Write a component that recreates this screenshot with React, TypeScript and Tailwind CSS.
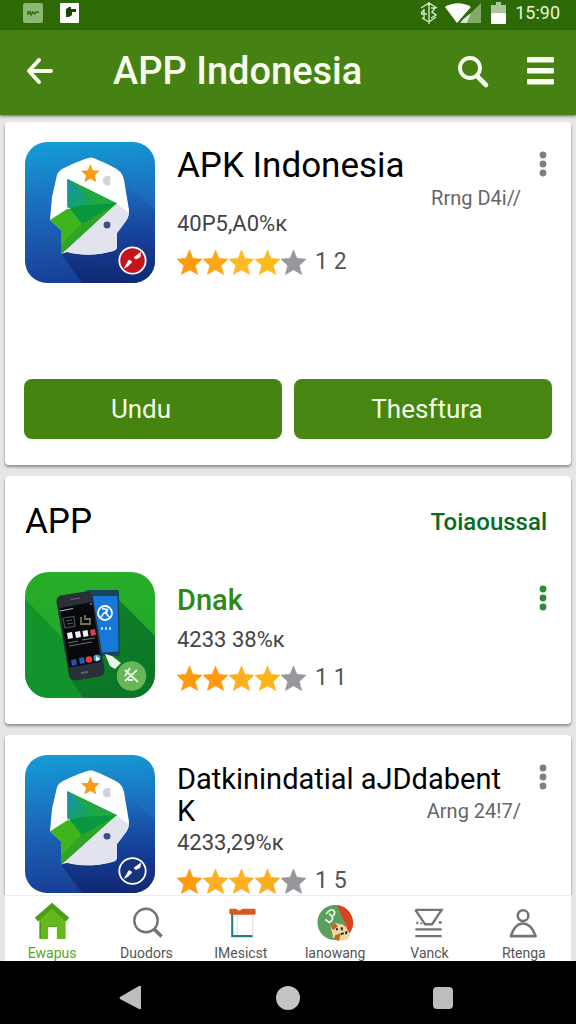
import React, { useState } from 'react';
import clsx from 'clsx';

type AppInfo = {
  title: string;
  titleRest?: string;
  tag?: string;
  size: string;
  stars: string[];
  reviews: string;
};

const GREY = '#97979b';

const featured: AppInfo = {
  title: 'APK Indonesia',
  tag: 'Rrng D4i//',
  size: '40P5,A0%к',
  stars: ['#ff9a0d', '#fba81c', '#fdb92a', '#fdba1c', GREY],
  reviews: '1 2',
};

const dnak: AppInfo = {
  title: 'Dnak',
  size: '4233 38%к',
  stars: ['#ff9a0d', '#ff9a12', '#fdae22', '#fdb41c', GREY],
  reviews: '1 1',
};

const datkin: AppInfo = {
  title: 'Datkinindatial aJDdabent',
  titleRest: 'K',
  tag: 'Arng 24!7/',
  size: '4233,29%к',
  stars: ['#ff9a0d', '#fdb022', '#fdb022', '#fbae1c', GREY],
  reviews: '1 5',
};

const STAR = 'M12 0l3.2 8 8.800.8-6.500 6 2.300 8.700-7.800-4.500-7.800 4.500 2.300-8.700L0 8.800l8.800-.8z';

function Stars({ colors, reviews }: { colors: string[]; reviews: string }) {
  return (
    <div className="flex h-7 items-center gap-px">
      {colors.map((color, i) => (
        <svg key={i} viewBox="0 0 24 24" className="h-[25px] w-[25px] shrink-0" fill={color} stroke={color} strokeWidth="0.6">
          <path d={STAR} />
        </svg>
      ))}
      <span className="ml-2 text-[23px] leading-7 text-[#555]">{reviews}</span>
    </div>
  );
}

function Kebab({ className }: { className: string }) {
  return (
    <button aria-label="More options" className={clsx('h-7 w-4 shrink-0', className)}>
      <svg viewBox="0 0 16 28" className="h-7 w-4" fill="currentColor">
        <circle cx="8" cy="5" r="3.4" />
        <circle cx="8" cy="14" r="3.4" />
        <circle cx="8" cy="23" r="3.4" />
      </svg>
    </button>
  );
}

function HelmetIcon({ id, badge, className }: { id: string; badge: string; className: string }) {
  return (
    <svg viewBox="0 0 130 141" preserveAspectRatio="none" className={className}>
      <defs>
        <linearGradient id={`${id}-bg`} x1="0.2" y1="0" x2="0.3" y2="1">
          <stop offset="0" stopColor="#149dd6" />
          <stop offset="0.45" stopColor="#1c6cbd" />
          <stop offset="1" stopColor="#173e96" />
        </linearGradient>
        <linearGradient id={`${id}-tip`} x1="0" y1="0" x2="0.8" y2="1">
          <stop offset="0" stopColor="#1d8bb8" />
          <stop offset="0.5" stopColor="#169d84" />
          <stop offset="1" stopColor="#17a843" />
        </linearGradient>
        <linearGradient id={`${id}-shade`} x1="0.5" y1="0" x2="0.5" y2="1">
          <stop offset="0" stopColor="#12479e" stopOpacity="0" />
          <stop offset="0.6" stopColor="#12318a" stopOpacity="0.6" />
          <stop offset="1" stopColor="#102a72" />
        </linearGradient>
        <clipPath id={`${id}-clip`}>
          <rect width="130" height="141" rx="22" />
        </clipPath>
      </defs>
      <g clipPath={`url(#${id}-clip)`}>
        <rect width="130" height="141" fill={`url(#${id}-bg)`} />
        <path d="M98 36L130 68V141H57L36 112Z" fill={`url(#${id}-shade)`} />
        <path
          d="M66 15.500C70 16 89 25 93 28C97 31 98 34 99 38L104 68C104 73 103 76 101.500 78L92 91V104C92 107 91 108 88 109C73 113.500 56 114 42 110L36 112V88L25 78L27 55L32 33C33 30 35 28 39 26C47 22 61 16 66 15.500Z"
          fill="#fff"
        />
        <path d="M92 62L104 71C103 76 102 77 101 79L92 91V104C92 107 91 108 88 109C73 113.500 56 114 40 109Z" fill="#e3e3ef" />
        <path d="M25 78L42 67L92 61L36 112.500V88Z" fill="#3fb41c" />
        <path d="M36 112.500L92 61L56 82L36 103Z" fill="#2fa426" />
        <path d="M42.500 37L92 61.500L57 82L42.500 63Z" fill="#08983f" />
        <path d="M42.500 37L92 61.500L45 63.500L42.500 65Z" fill="#22a843" />
        <path d="M42.500 37L70 61L42.500 66Z" fill={`url(#${id}-tip)`} />
        <path d={STAR} transform="translate(56 22) scale(.78)" fill="#f99a18" />
        <path d="M78 37C79 34 83 33 85.500 34.500V42C83 45 79 43 78 40Z" fill="#d3d3de" />
        <circle cx="82" cy="83" r="3.400" fill="#3b4f83" />
        <circle cx="107.500" cy="118.500" r="13.200" fill={badge} stroke="#fff" strokeWidth="1.800" />
        <path d="M99.500 126L104 118L107 120L103 124Z M109 115.500L115.500 110.500L115 115L111 117Z" fill="#fff" stroke="#fff" strokeWidth=".8" />
      </g>
    </svg>
  );
}

function PhonesIcon({ className }: { className: string }) {
  return (
    <svg viewBox="0 0 130 126" className={className}>
      <defs>
        <linearGradient id="phones-bg" x1="0" y1="0" x2="0" y2="1">
          <stop offset="0" stopColor="#27ad27" />
          <stop offset="1" stopColor="#21a532" />
        </linearGradient>
        <linearGradient id="phones-shade" x1="0" y1="0" x2="0.4" y2="1">
          <stop offset="0" stopColor="#118126" />
          <stop offset="1" stopColor="#0b7726" />
        </linearGradient>
        <clipPath id="phones-clip">
          <rect width="130" height="126" rx="24" />
        </clipPath>
      </defs>
      <g clipPath="url(#phones-clip)">
        <rect width="130" height="126" fill="url(#phones-bg)" />
        <path d="M0 27L58 87V126H0Z" fill="#12932c" />
        <path d="M94 28L130 64V126H58L46 108Z" fill="url(#phones-shade)" />
        <path d="M63 20L92 20L93 82L70 82Z" fill="#19445c" stroke="#19445c" strokeWidth="4" strokeLinejoin="round" />
        <path d="M66 24H92.500L93.500 79.500L70 81Z" fill="#1678d8" />
        <circle cx="80" cy="41" r="7" fill="none" stroke="#fff" strokeWidth="1.800" />
        <path d="M77 37H80C83 37 83 41 79 41L76 45M81 41L84 45M83 37L80 41" fill="none" stroke="#fff" strokeWidth="1.600" />
        <path d="M76 56.500H78M80 56.500H82M84 56.500H86" stroke="#cfe6ff" strokeWidth="2.500" />
        <path d="M36 26L61 22C63 22 65 23 65.500 25L77 98C77 100 76 102 74 102L50 106C48 106 47 105 46.500 103L34 30C34 28 34 27 36 26Z" fill="#293039" stroke="#293039" strokeWidth="5" strokeLinejoin="round" />
        <path d="M35 36L67.500 30L76 90L44 95.500Z" fill="#08090d" />
        <path d="M46 27.500L55 26" stroke="#626a70" strokeWidth="1.200" />
        <path d="M35 39L48 36.500M66 31V33" stroke="#bbb" strokeWidth="1" />
        <path d="M38 46L49 44.500L50 54L40 56Z" fill="none" stroke="#4b5050" strokeWidth="1.200" />
        <path d="M41 49L47 48M42 52L48 51" stroke="#53605a" strokeWidth="1" />
        <path d="M56 45V52H65V47H60V43" fill="none" stroke="#777457" strokeWidth="1.800" />
        <path d="M42 61L47 60L48 66L43 67Z M50 60L55 59L56 65L51 66Z M57.500 59L62.500 58L63.500 64L58.500 65Z" fill="#f3f3f3" />
        <path d="M65 58L70 57L71 63L66 64Z" fill="#d83d51" />
        <path d="M43 71L53 69M44 74L67 70M57 68L70 66" stroke="#8a8a8a" strokeWidth=".8" />
        <path d="M46 88L51 87L52 93L47 94Z" fill="#2451b3" />
        <path d="M54 86L59 85L60 91L55 92Z" fill="#3158b5" />
        <circle cx="64" cy="87.500" r="3.300" fill="#ed3b3c" />
        <circle cx="72" cy="86" r="3.500" fill="#30a7d3" />
        <path d="M71 84L75 87L71 89Z" fill="#fff" />
        <path d="M56 101L63 100" stroke="#5d656c" strokeWidth="2" />
        <path d="M80 82L87 84L96 91L93 94L90 97L85 94L82 87Z" fill="#edf1e7" />
        <circle cx="106.500" cy="104" r="14.700" fill="#67b657" />
        <path d="M100 98L113 110M112 98L100 109M100 104L105 96M103 108H108" fill="none" stroke="#e6f5dc" strokeWidth="1.800" />
      </g>
    </svg>
  );
}

type AppRowProps = {
  app: AppInfo;
  icon: React.ReactNode;
  titleClass: string;
  infoClass: string;
  kebabClass: string;
};

function AppRow({ app, icon, titleClass, infoClass, kebabClass }: AppRowProps) {
  return (
    <div className="flex items-start">
      {icon}
      <div className={clsx('ml-[22px] flex min-w-0 flex-1 flex-col', infoClass)}>
        <h2 className={clsx('whitespace-nowrap', titleClass)}>{app.title}</h2>
        {app.tag && (
          <div className="flex items-center justify-between">
            <span className={titleClass}>{app.titleRest}</span>
            <span className="text-[20px] leading-5 text-[#666]">{app.tag}</span>
          </div>
        )}
        <p className="text-[22px] leading-8 text-[#444]">{app.size}</p>
        <div className="mt-2">
          <Stars colors={app.stars} reviews={app.reviews} />
        </div>
      </div>
      <Kebab className={clsx('ml-[14px]', kebabClass)} />
    </div>
  );
}

function StatusBar() {
  return (
    <div className="flex h-[30px] shrink-0 items-center bg-[#2d6a05] pr-4 pl-[23px] pb-1">
      <svg viewBox="0 0 20 20" className="h-5 w-5">
        <rect width="20" height="20" rx="2" fill="#8db873" />
        <path d="M5 8V12M7 8L8 12L10 9L12 11L13 9H16M5 10H8" fill="none" stroke="#356d16" strokeWidth="1.500" />
      </svg>
      <svg viewBox="0 0 20 20" className="ml-[17px] h-5 w-5">
        <rect width="19" height="20" rx="1" fill="#fff" />
        <path d="M6 6L9 4H11V6H16V9H12V12L9 14H6Z" fill="#1e4607" />
      </svg>
      <div className="ml-auto flex items-center">
        <svg viewBox="0 0 18 22" className="h-[22px] w-[18px]" fill="none" stroke="#d5e9c5" strokeWidth="1.400">
          <path d="M9 0V22M1 6L9 1L17 6M4 7V17M1 12H7M2 16L9 20L16 15M11 6H15L12 10L16 13L11 16M4 8L1 11" />
        </svg>
        <svg viewBox="0 0 36 20" className="ml-[7px] h-5 w-9">
          <path d="M36 0V20H16Z" fill="#80aa65" />
          <path d="M18 16L26 10L22 20H14Z" fill="#d7e7cb" />
          <path d="M0 4C8-1 18-1 26 4L12 20Z" fill="#fff" />
          <path d="M28 3L14 20" stroke="#2d6a05" strokeWidth="1.500" />
        </svg>
        <svg viewBox="0 0 15 22" className="ml-[10px] h-[22px] w-[15px]">
          <path d="M5 0H10V3H15V11H0V3H5Z" fill="#abc69a" />
          <rect y="11" width="15" height="11" rx="1" fill="#fff" />
        </svg>
        <span className="ml-[9px] text-[18px] leading-6 text-[#e6f5dc]">15:90</span>
      </div>
    </div>
  );
}

const tabs = [
  {
    label: 'Ewapus',
    icon: (
      <svg viewBox="0 0 38 40" className="h-10 w-[38px]">
        <path d="M6 18L19 7L33 18V38H24V25H15V38H6Z" fill="#66b91d" />
        <path d="M3 18L19 4L35 18" fill="none" stroke="#4c9e17" strokeWidth="5" />
        <path d="M7 20V37M15 25H24" stroke="#438f14" strokeWidth="1" />
      </svg>
    ),
  },
  {
    label: 'Duodors',
    icon: (
      <svg viewBox="0 0 38 40" className="h-10 w-[38px]" fill="none" stroke="#737373">
        <circle cx="19" cy="19" r="12" strokeWidth="2.500" />
        <path d="M27.500 28L35 35.500" strokeWidth="3.600" />
      </svg>
    ),
  },
  {
    label: 'IMesicst',
    icon: (
      <svg viewBox="0 0 38 40" className="h-10 w-[38px]">
        <path d="M10 12V35H31" fill="none" stroke="#247f8d" strokeWidth="2.200" />
        <path d="M15 13V33M31 13V34" stroke="#e3dedc" strokeWidth="1.200" />
        <path d="M8 7H14L17 9L21 7H33Q34 7 34 9V12Q34 13 32 13H10Q7 13 7 11V8Z" fill="#d75a1d" />
      </svg>
    ),
  },
  {
    label: 'lanowang',
    icon: (
      <svg viewBox="0 0 38 40" className="h-10 w-[38px]">
        <circle cx="19" cy="21" r="18" fill="#5b9f5f" />
        <path d="M21 3C41 6 43 31 27 37L30 23Z" fill="#d9421d" />
        <path d="M10 12Q15 6 18 9Q20 12 16 15L13 12M16 15Q18 18 13 21L9 18" fill="none" stroke="#e8f6de" strokeWidth="1.800" />
        <path d="M14 24L19 21L25 23L30 21L31 27L35 34L31 39L23 40L17 37L16 31Z" fill="#eed9a1" />
        <path d="M14 24L19 21L22 25L17 29Z M26 22L31 21L30 26Z M19 34L25 32L23 40L18 38Z" fill="#b96b2b" />
        <path d="M20 28H22M26 26V29M25 33L28 32M31 30L30 33" stroke="#2a2215" strokeWidth="2" />
      </svg>
    ),
  },
  {
    label: 'Vanck',
    icon: (
      <svg viewBox="0 0 38 40" className="h-10 w-[38px]" fill="none" stroke="#747474" strokeWidth="2.400">
        <path d="M5 8H32L22 23H15L5 8" />
        <path d="M10 22H12M14 22L22 23L26 18" strokeWidth="1.600" />
        <path d="M5 28H32M5 35H32" />
        <path d="M6 21.500H8M29 21H32" />
      </svg>
    ),
  },
  {
    label: 'Rtenga',
    icon: (
      <svg viewBox="0 0 38 40" className="h-10 w-[38px]" fill="none" stroke="#747474" strokeWidth="2.600">
        <circle cx="18" cy="14" r="5.500" />
        <path d="M5.500 35C8 27 12 22 18 22C24 22 28 27 31 35Z" strokeLinejoin="round" />
      </svg>
    ),
  },
];

export default function App() {
  const [activeTab, setActiveTab] = useState('Ewapus');

  return (
    <div className="flex h-screen w-full flex-col overflow-hidden bg-[#e6e6e6] font-[Roboto,sans-serif]">
      <StatusBar />

      {/* app bar */}
      <header className="z-10 flex h-[85px] shrink-0 items-center bg-[#468213] pr-4 pb-1 pl-6 text-[#f8ffed] shadow-[0_1px_3px_rgba(0,0,0,0.6)]">
        <button aria-label="Back" className="h-8 w-8">
          <svg viewBox="0 0 32 32" className="h-8 w-8" fill="none" stroke="currentColor" strokeWidth="4" strokeLinecap="round" strokeLinejoin="round">
            <path d="M15 5L5 16L15 27M6 16H27" />
          </svg>
        </button>
        <h1 className="ml-[57px] flex-1 text-[38px] leading-[48px] font-medium whitespace-nowrap">APP Indonesia</h1>
        <button aria-label="Search" className="h-9 w-9">
          <svg viewBox="0 0 36 36" className="h-9 w-9" fill="none" stroke="currentColor" strokeLinecap="round">
            <circle cx="14" cy="15" r="10" strokeWidth="3.800" />
            <path d="M22 24L30 32" strokeWidth="4.600" />
          </svg>
        </button>
        <button aria-label="Menu" className="ml-8 h-9 w-9">
          <svg viewBox="0 0 36 36" className="h-9 w-9" fill="currentColor">
            <rect x="3" y="4" width="27" height="5.500" rx="1" />
            <rect x="3" y="15" width="27" height="5.500" rx="1" />
            <rect x="3" y="26" width="27" height="5.500" rx="1" />
          </svg>
        </button>
      </header>

      {/* cards */}
      <main className="flex min-h-0 flex-1 flex-col gap-[11px] overflow-hidden px-[5px] pt-[7px]">
        <section className="shrink-0 rounded bg-white px-5 pt-5 pb-[26px] shadow-[0_2px_3px_rgba(0,0,0,0.4)]">
          <AppRow
            app={featured}
            icon={<HelmetIcon id="featured" badge="#c4141c" className="h-[141px] w-[130px] shrink-0" />}
            titleClass="text-[35px] leading-[44px]"
            infoClass="pt-[2px]"
            kebabClass="mt-2 text-[#808080]"
          />
          <div className="-mx-px mt-24 grid grid-cols-2 gap-3">
            <button className="h-[60px] rounded-lg bg-[#468410] pr-6 text-[26px] text-[#f3ffe8]">Undu</button>
            <button className="h-[60px] rounded-lg bg-[#468611] pl-2 text-[26px] text-[#f3ffe8]">Thesftura</button>
          </div>
        </section>

        <section className="shrink-0 rounded bg-white px-5 pb-[26px] shadow-[0_2px_3px_rgba(0,0,0,0.4)]">
          <div className="flex h-24 items-center justify-between pr-1 pb-1">
            <h2 className="text-[35px] leading-10">APP</h2>
            <a href="#all" className="text-[24px] leading-8 font-medium text-[#0a6b20]">
              Toiaoussal
            </a>
          </div>
          <AppRow
            app={dnak}
            icon={<PhonesIcon className="h-[126px] w-[130px] shrink-0" />}
            titleClass="text-[29px] leading-10 mb-1 font-medium text-[#2c8b17]"
            infoClass="pt-2"
            kebabClass="mt-3 text-[#2f8a35]"
          />
        </section>

        <section className="shrink-0 rounded bg-white px-5 pt-5 pb-6 shadow-[0_2px_3px_rgba(0,0,0,0.4)]">
          <AppRow
            app={datkin}
            icon={<HelmetIcon id="datkin" badge="#173379" className="h-[138px] w-[130px] shrink-0" />}
            titleClass="text-[29px] leading-8"
            infoClass="pt-2"
            kebabClass="mt-2 text-[#808080]"
          />
        </section>
      </main>

      {/* bottom tabs */}
      <nav className="z-10 mx-[5px] flex h-[66px] shrink-0 overflow-hidden border-t border-[#ededed] bg-white">
        {tabs.map((tab) => (
          <button
            key={tab.label}
            onClick={() => setActiveTab(tab.label)}
            className={clsx(
              'flex flex-1 flex-col items-center justify-start pt-[6px] text-[14px] leading-5',
              tab.label === activeTab ? 'text-[#57a61d]' : 'text-[#555]'
            )}
          >
            {tab.icon}
            <span className="mt-1 leading-4">{tab.label}</span>
          </button>
        ))}
      </nav>

      {/* system navigation */}
      <div className="flex h-[63px] shrink-0 items-center justify-center gap-[133px] bg-black pt-[10px] pr-1 text-[#bdbdbd]">
        <button aria-label="System back">
          <svg viewBox="0 0 24 26" className="h-[26px] w-6" fill="currentColor">
            <path d="M1 12L20 1Q22 0 22 2V23Q22 25 20 24L1 14Q0 13 1 12Z" />
          </svg>
        </button>
        <button aria-label="System home" className="h-6 w-6 rounded-full bg-[#c4c4c4]" />
        <button aria-label="Recent apps" className="h-[22px] w-5 rounded-sm bg-[#bdbdbd]" />
      </div>
    </div>
  );
}
